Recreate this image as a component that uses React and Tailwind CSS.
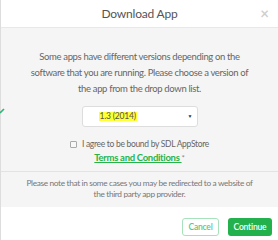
export default function App() {
  return (
    <div className="relative w-[278px] h-[240px] bg-white overflow-hidden text-[#666]" style={{ fontFamily: 'Lato, "Open Sans", sans-serif' }}>
      {/* background check peeking out */}
      <svg className="absolute left-0 top-[108px]" width="5" height="6" viewBox="0 0 5 6">
        <path d="M0 5 L4 1" stroke="#2bb673" strokeWidth="1.6" />
      </svg>

      <div className="h-full border-l border-[#ddd] flex flex-col">
        {/* header */}
        <div className="relative h-[27px] flex items-center justify-center">
          <span className="text-[12px] tracking-[-0.2px] text-[#555]">Download App</span>
          <span className="absolute right-[9px] top-[2px] text-[15px] text-[#d0d0d0] font-bold">×</span>
        </div>

        {/* body */}
        <div className="bg-[#f5f5f5] border-t border-[#e8e8e8] h-[180px] flex flex-col items-center">
          <p className="mt-[21px] text-[9.5px] tracking-[-0.35px] leading-[16px] text-center whitespace-nowrap">
            Some apps have different versions depending on the<br />
            software that you are running. Please choose a version of<br />
            the app from the drop down list.
          </p>
          <div className="mt-[9px] w-[116px] h-[21px] bg-white border border-[#ddd] rounded-[3px] flex items-center pl-[16px] pr-[4px]">
            <span className="bg-[#ffff33] text-[8.5px] leading-[9px] px-[1px] tracking-[-0.2px] text-[#555]">1.3 (2014)</span>
            <span className="ml-auto text-[5px] text-[#333]">▼</span>
          </div>
          <div className="mt-[10px] flex items-center gap-[5px] text-[8.5px] tracking-[-0.3px] leading-[14px]">
            <span className="w-[7px] h-[7px] border border-[#aaa] rounded-[1px] bg-[#f8f8f8]" />
            <span>I agree to be bound by SDL AppStore</span>
          </div>
          <div className="text-[9.5px] tracking-[-0.3px] leading-[14px] whitespace-nowrap">
            <span className="text-[#27b34b] font-bold underline">Terms and Conditions </span>
            <span className="text-[8px] text-[#888]">*</span>
          </div>
          <div className="w-full border-t border-[#e3e3e3] mt-[6px]" />
          <p className="mt-[6px] text-[8.3px] tracking-[-0.35px] leading-[11px] text-center text-[#777] whitespace-nowrap">
            Please note that in some cases you may be redirected to a website of<br />
            the third party app provider.
          </p>
        </div>

        {/* footer */}
        <div className="flex justify-end items-start gap-[9px] pr-[6px] pt-[11px]">
          <button className="w-[37px] h-[18px] border border-[#a8e2bd] rounded-[3px] text-[8.5px] tracking-[-0.2px] font-semibold text-[#5cc87f] bg-white">Cancel</button>
          <button className="w-[44px] h-[18px] rounded-[3px] text-[8.5px] tracking-[-0.2px] font-semibold text-white bg-[#22b14c]">Continue</button>
        </div>
      </div>
    </div>
  )
}
